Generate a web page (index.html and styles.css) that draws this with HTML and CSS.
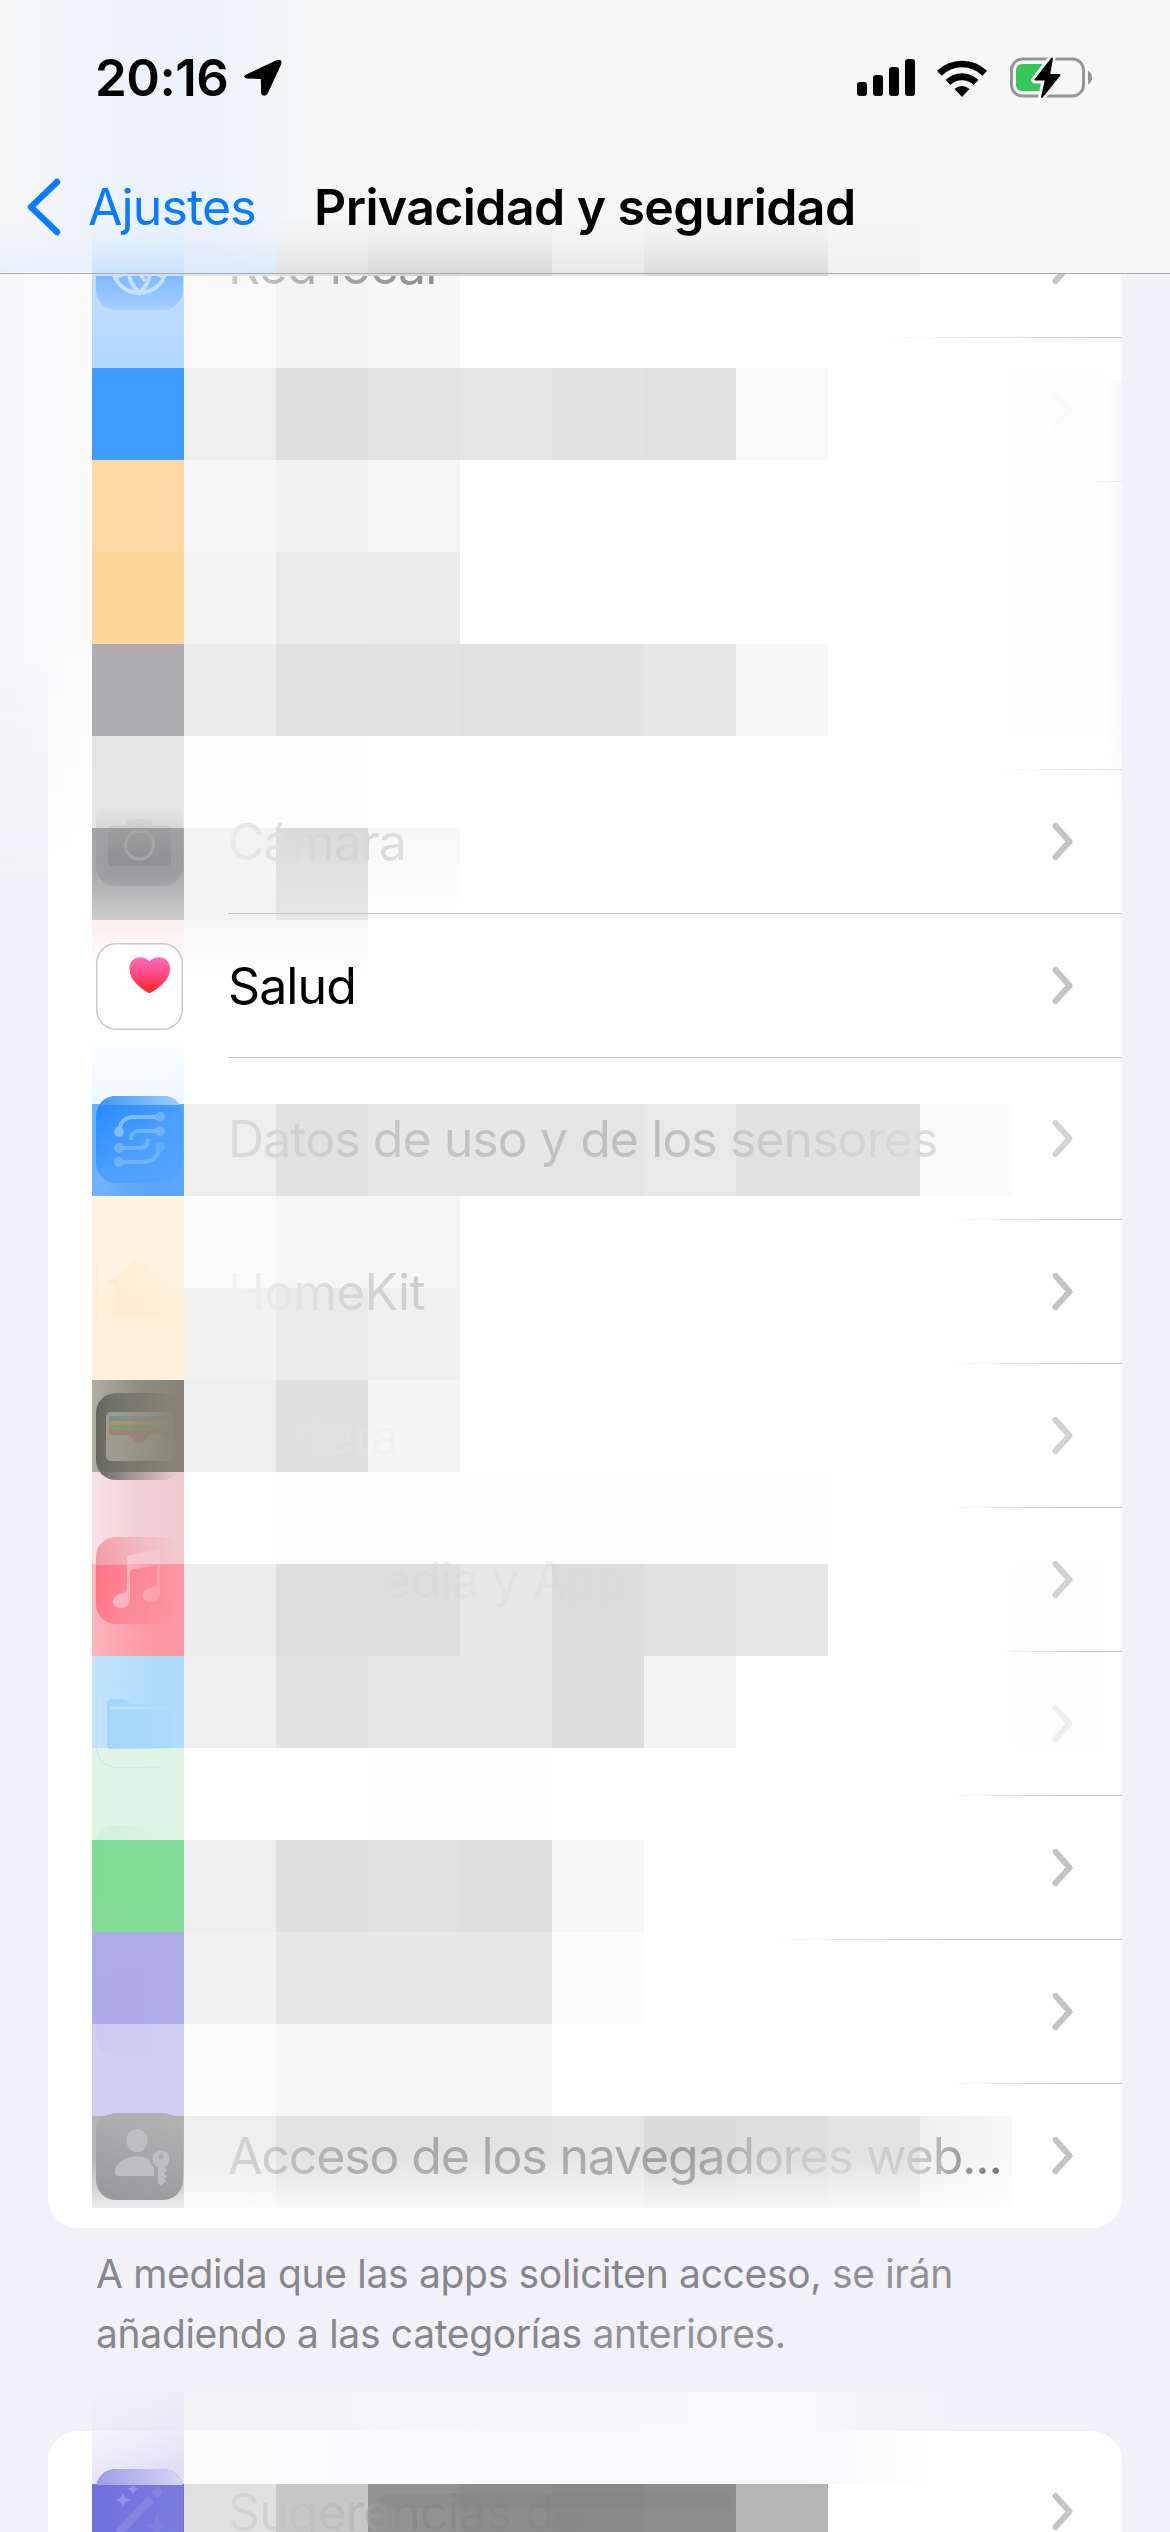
FILE: index.html
```html
<!DOCTYPE html>
<html lang="es">
<head>
<meta charset="utf-8">
<title>Privacidad y seguridad</title>
<link rel="stylesheet" href="styles.css">
</head>
<body>
<svg class="defs" width="0" height="0" aria-hidden="true">
  <symbol id="chev" viewBox="0 0 24 44"><path d="M4.500 6 L18.500 21.500 L4.500 37" fill="none" stroke="currentColor" stroke-width="6" stroke-linecap="round" stroke-linejoin="round"/></symbol>
</svg>
<div class="screen">
  <header class="header">
    <svg class="header-tint" viewBox="0 0 1170 276" aria-hidden="true">
      <defs>
        <linearGradient id="up" x1="0" y1="0" x2="0" y2="1"><stop offset="0" stop-color="#fff" stop-opacity="0"/><stop offset=".35" stop-color="#fff" stop-opacity=".2"/><stop offset="1" stop-color="#fff"/></linearGradient>
        <mask id="fadeUp"><rect x="0" y="216" width="1170" height="60" fill="url(#up)"/></mask>
        <linearGradient id="sideTint"><stop offset="0" stop-color="#eaf2fd" stop-opacity="0"/><stop offset=".45" stop-color="#eaf2fd" stop-opacity=".9"/><stop offset=".65" stop-color="#eaf2fd" stop-opacity=".8"/><stop offset="1" stop-color="#f2f4f8" stop-opacity="0"/></linearGradient>
      </defs>
      <rect x="0" y="0" width="330" height="273" fill="url(#sideTint)"/>
      <g mask="url(#fadeUp)">
        <rect x="0" y="216" width="92" height="56" fill="#e6f0fc"/>
        <rect x="92" y="216" width="92" height="60" fill="#cae2fa"/>
        <rect x="184" y="216" width="92" height="60" fill="#d9e8f8"/>
        <rect x="276" y="216" width="92" height="60" fill="#e1e1e1"/>
        <rect x="368" y="216" width="184" height="60" fill="#d7d7d7"/>
        <rect x="552" y="216" width="92" height="60" fill="#e6e6e6"/>
        <rect x="644" y="216" width="184" height="60" fill="#dadada"/>
        <rect x="828" y="216" width="92" height="60" fill="#f0f0f0"/>
      </g>
      <rect x="0" y="273" width="1170" height="1" fill="#a9abb0"/>
    </svg>
    <div class="status">
      <div class="clock">
        <span class="time">20:16</span>
        <svg class="arrow" width="40" height="40" viewBox="0 0 40 40"><path d="M3.200 16.500 L34 2 Q39.500 .5 38.200 6.200 L24.500 36 Q21 39.500 18.200 36 L17.800 21 L3.500 20.500 Q-1 18.500 3.200 16.500Z"/></svg>
      </div>
      <div class="indicators">
        <svg width="58" height="38" viewBox="0 0 58 38"><rect x="0" y="23" width="10" height="14" rx="3"/><rect x="16" y="16" width="10" height="21" rx="3"/><rect x="32" y="8" width="10" height="29" rx="3"/><rect x="48" y="0" width="10" height="37" rx="3"/></svg>
        <svg class="wifi" width="50" height="37" viewBox="0 0 50 37"><path d="M0 10.800 A36 36 0 0 1 50 10.800 L45.500 15.700 A29 29 0 0 0 4.500 15.700Z"/><path d="M8.600 20 A23.500 23.500 0 0 1 41.400 20 L36.800 25 A17 17 0 0 0 13.200 25Z"/><path d="M17.500 29 A11 11 0 0 1 32.500 29 L25 37Z"/></svg>
        <svg class="battery" width="82" height="42" viewBox="0 0 82 42"><rect x="1.500" y="2" width="72" height="37" rx="11" fill="none" stroke="#969696" stroke-width="3"/><path d="M78 13.500 Q82 16 82 20.500 Q82 25 78 27.500Z" fill="#969696"/><rect x="6" y="7" width="32" height="27" rx="6" fill="#34c759"/><path d="M42 .8 L24.800 23 H35.300 L31.500 40.500 L50 17.500 H39.500Z" fill="#f7f7f7" stroke="#f7f7f7" stroke-width="7" stroke-linejoin="round"/><path d="M42 1.500 L25.500 22.500 H36 L32 40 L49.500 18 H39Z" fill="#000" stroke="#000" stroke-width="2" stroke-linejoin="round"/></svg>
      </div>
    </div>
    <nav class="navbar">
      <svg class="back-icon" width="34" height="58" viewBox="0 0 34 58"><path d="M30 4 L4 29 L30 54" fill="none" stroke="#0a7aff" stroke-width="6.500" stroke-linecap="round" stroke-linejoin="round"/></svg>
      <span class="back">Ajustes</span>
      <h1 class="title">Privacidad y seguridad</h1>
    </nav>
  </header>

  <main class="content">
    <section class="card">
      <div class="row">
        <svg class="icon i-net" viewBox="0 0 87 87"><defs><linearGradient id="netIcon" x1="0" y1="0" x2="0" y2="1"><stop offset=".5" stop-color="#73b3ff"/><stop offset="1" stop-color="#a6cfff"/></linearGradient></defs><rect width="87" height="87" rx="20" fill="url(#netIcon)"/><g fill="none" stroke="#c9e1ff" stroke-width="4"><circle cx="43.500" cy="43" r="27"/><path d="M43.500 16 C28 30 28 56 43.500 70 C59 56 59 30 43.500 16 M17 37 Q43 58 70 37 M20 54 Q34 48 44 49 Q56 48 68 54 M43 49 L49 58"/></g></svg>
        <div class="body line-1"><span class="label ink-1">Red local</span><svg class="chev"><use href="#chev"/></svg></div>
      </div>
      <div class="row"><div class="body line-2"><svg class="chev faint"><use href="#chev"/></svg></div></div>
      <div class="row"><div class="body line-0"></div></div>
      <div class="row"><div class="body line-3"></div></div>
      <div class="row">
        <svg class="icon fade-up" viewBox="0 0 87 87"><rect width="87" height="87" rx="20" fill="#8e8e93" opacity=".4"/><path d="M17 26 H29 Q31 20 36 20 H51 Q56 20 58 26 H69 Q75 26 75 31 V61 Q75 67 70 67 H17 Q12 67 12 61 V31 Q12 26 17 26Z" fill="#858588" opacity=".5"/><circle cx="43.500" cy="46" r="14" fill="none" stroke="#a6a6a8" stroke-width="3"/></svg>
        <div class="body line-4"><span class="label ink-cam">Cámara</span><svg class="chev"><use href="#chev"/></svg></div>
      </div>
      <div class="row">
        <svg class="icon" viewBox="0 0 87 87"><defs><linearGradient id="heart" x1="0" y1="0" x2="0" y2="1"><stop offset="0" stop-color="#ff6cb8"/><stop offset=".5" stop-color="#ff4583"/><stop offset="1" stop-color="#ff2616"/></linearGradient></defs><rect x=".75" y=".75" width="85.500" height="85.500" rx="19.500" fill="#fff" stroke="#c8c8ca" stroke-width="1.500"/><path d="M53.500 18.500 C48 11.500 33.500 12.500 33.500 26 C33.500 37 44 45 53.500 50.500 C63 45 74 37 74 26 C74 12.500 59 11.500 53.500 18.500Z" fill="url(#heart)"/></svg>
        <div class="body line-5"><span class="label">Salud</span><svg class="chev"><use href="#chev"/></svg></div>
      </div>
      <div class="row tall">
        <svg class="icon" viewBox="0 0 87 87"><defs><linearGradient id="sens" x1="0" y1="0" x2=".8" y2="1"><stop offset="0" stop-color="#2389ff"/><stop offset=".6" stop-color="#4b9fff"/><stop offset="1" stop-color="#54a4ff"/></linearGradient><linearGradient id="sensTop" x1="0" x2="1"><stop offset="0" stop-color="#3b94ff"/><stop offset="1" stop-color="#a5cfff"/></linearGradient><clipPath id="r87"><rect width="87" height="87" rx="20"/></clipPath></defs><g clip-path="url(#r87)"><rect width="87" height="87" fill="url(#sens)"/><rect width="87" height="9" fill="url(#sensTop)"/></g><g fill="none" stroke="#6db3ff" stroke-width="4"><path d="M23 36 C24 26 29 21 38 21 H64" stroke="#7ebcff"/><path d="M35 44 C35 37 38 35 44 35 H64"/><path d="M23 52 H43 C49 52 52 49 52 43"/><path d="M23 66 H45 C57 66 62 61 64 51"/></g><g fill="#6fb3ff"><circle cx="23" cy="36" r="5" fill="#80bdff"/><circle cx="64" cy="21" r="5"/><circle cx="64" cy="35" r="5"/><circle cx="23" cy="52" r="5"/><circle cx="23" cy="66" r="5"/><circle cx="64" cy="51" r="5" fill="#62acff"/></g></svg>
        <div class="body line-6"><span class="label ink-sens">Datos de uso y de los sensores</span><svg class="chev soft"><use href="#chev"/></svg></div>
      </div>
      <div class="row">
        <svg class="icon fade-r" viewBox="0 0 87 87"><rect x=".5" y=".5" width="86" height="86" rx="20" fill="none" stroke="#fbecd6"/><path d="M10 35 L43.500 9 L76 35 H70 V62 Q70 68 64 68 H24 Q18 68 18 62 V35Z" fill="#ffe7c4" opacity=".7"/></svg>
        <div class="body line-6"><span class="label ink-home">HomeKit</span><svg class="chev"><use href="#chev"/></svg></div>
      </div>
      <div class="row">
        <svg class="icon fade-r" viewBox="0 0 87 87"><rect width="87" height="87" rx="20" fill="#65665c"/><rect x="10" y="19" width="67" height="49" rx="5" fill="#9d9b8f"/><path d="M13 23 H74 V29 H13Z" fill="#758a90"/><path d="M13 28 H74 V34 H13Z" fill="#ad9157"/><path d="M13 32 H74 V38 H13Z" fill="#75986f"/><path d="M13 37 H74 V42 H56 C50 42 50 50 43.500 50 C37 50 37 42 30 42 H13Z" fill="#a07a6c"/></svg>
        <div class="body line-7"><span class="label ink-wallet">Cartera</span><svg class="chev soft"><use href="#chev"/></svg></div>
      </div>
      <div class="row">
        <svg class="icon fade-r" viewBox="0 0 87 87"><defs><linearGradient id="mus" x1="0" y1="0" x2="0" y2="1"><stop offset="0" stop-color="#f0a0ab"/><stop offset=".32" stop-color="#f298a4"/><stop offset=".33" stop-color="#ff7083"/><stop offset="1" stop-color="#ff7a8b"/></linearGradient></defs><rect width="87" height="87" rx="20" fill="url(#mus)"/><path d="M31 19 L64 12 V56 C64 62 59 65 55 65 C44 65 44 53 54 51 Q61 50 61 46 V28 L34 33 V62 C34 68 30 71 25 71 C15 71 14 60 24 57 Q31 56 31 52Z" fill="#fbbcc4"/></svg>
        <div class="body line-8"><span class="label ink-media">Multimedia y Apple</span><svg class="chev soft"><use href="#chev"/></svg></div>
      </div>
      <div class="row">
        <svg class="icon fade-r" viewBox="0 0 87 87"><rect x=".5" y=".5" width="86" height="86" rx="20" fill="none" stroke="#b2dff5" opacity=".7"/><path d="M11 24 Q11 18 16 18 H25 Q31 18 34 23 H76 V68 H16 Q11 68 11 64Z" fill="#9bd2fb"/><path d="M14 27 H74" stroke="#bfe4fc" stroke-width="3"/></svg>
        <div class="body line-7"><svg class="chev faint2"><use href="#chev"/></svg></div>
      </div>
      <div class="row">
        <svg class="icon fade-r dim" viewBox="0 0 87 87"><rect width="87" height="87" rx="20" fill="#6fd487"/></svg>
        <div class="body line-9"><svg class="chev"><use href="#chev"/></svg></div>
      </div>
      <div class="row">
        <svg class="icon fade-r dim" viewBox="0 0 87 87"><rect width="87" height="87" rx="20" fill="#a3a2e4"/></svg>
        <div class="body line-7"><svg class="chev"><use href="#chev"/></svg></div>
      </div>
      <div class="row">
        <svg class="icon" viewBox="0 0 87 87"><defs><linearGradient id="acc" x1=".3" y1="0" x2="0" y2="1"><stop offset="0" stop-color="#b0b0b1"/><stop offset="1" stop-color="#97969b"/></linearGradient></defs><rect width="87" height="87" rx="20" fill="url(#acc)"/><g fill="#bebec0"><ellipse cx="41" cy="27.500" rx="10.500" ry="11.500"/><path d="M19 60 C19 49 30 43.500 41 43.500 C47 43.500 51 45 53 46.500 C54 51 56 53 58 54 V63 H23 Q19 63 19 60Z"/><path fill-rule="evenodd" d="M65 37.500 A8.500 8.500 0 0 1 68 54 L71 57 L68 60 L71 64 L68 66 L70 68 L65 73 L62 70 V54 A8.500 8.500 0 0 1 65 37.500Z M65 41 A2.500 2.500 0 1 0 65 46 A2.500 2.500 0 1 0 65 41Z"/></g></svg>
        <div class="body"><span class="label ink-access">Acceso de los navegadores web...</span><svg class="chev"><use href="#chev"/></svg></div>
      </div>
    </section>
    <p class="note">A medida que las apps soliciten acceso, <span class="paler">se irán</span><br>añadiendo a las categorías <span class="paler">anteriores.</span></p>
    <section class="card second">
      <div class="row tall">
        <svg class="icon" viewBox="0 0 87 87"><defs><linearGradient id="sug" x1="0" x2="1"><stop offset="0" stop-color="#7270dc"/><stop offset="1" stop-color="#7c7be0"/></linearGradient><linearGradient id="sugTop"><stop offset="0" stop-color="#9d9be8"/><stop offset="1" stop-color="#d6d6f4"/></linearGradient></defs><g clip-path="url(#r87)"><rect width="87" height="87" fill="url(#sug)"/><rect width="87" height="16" fill="url(#sugTop)"/></g><g fill="#9492e8"><path d="M27 23 Q28 30 35 31 Q28 32 27 39 Q26 32 19 31 Q26 30 27 23Z"/><path d="M37 14 Q38 19 43 20 Q38 21 37 26 Q36 21 31 20 Q36 19 37 14Z"/><path d="M52 27 L58 33 L26 66 Q20 67 20 61Z M56 23 L60 20 Q67 18 65 25 L62 29Z" fill="#8785e2"/><path d="M61 44 Q62 56 74 57 Q62 58 61 70 Q60 58 48 57 Q60 56 61 44Z" fill="#817fdf"/></g></svg>
        <div class="body"><span class="label ink-sug">Sugerencias de</span><svg class="chev"><use href="#chev"/></svg></div>
      </div>
    </section>
  </main>

  <svg class="mosaic" viewBox="0 0 1170 2532" shape-rendering="crispEdges" aria-hidden="true">
    <defs>
      <linearGradient id="hazeX"><stop offset="0" stop-color="#f6f6fa"/><stop offset="1" stop-color="#fbfbfc"/></linearGradient>
      <linearGradient id="fadeDown" x1="0" y1="0" x2="0" y2="1"><stop offset="0" stop-color="#fff"/><stop offset=".55" stop-color="#fff"/><stop offset="1" stop-color="#fff" stop-opacity="0"/></linearGradient>
      <mask id="mDown"><rect x="0" y="273" width="1170" height="640" fill="url(#fadeDown)"/></mask>
      <linearGradient id="cardEdge"><stop offset="0" stop-color="#f7f7fa" stop-opacity="0"/><stop offset="1" stop-color="#f7f7fa"/></linearGradient>
      <linearGradient id="down" x1="0" y1="0" x2="0" y2="1"><stop offset="0" stop-color="#f6f6f6"/><stop offset="1" stop-color="#f6f6f6" stop-opacity="0"/></linearGradient>
      <linearGradient id="pink" x1="0" y1="0" x2="0" y2="1"><stop offset="0" stop-color="#ffeef0"/><stop offset=".6" stop-color="#fff"/></linearGradient>
      <linearGradient id="bluish" x1="0" y1="0" x2="0" y2="1"><stop offset="0" stop-color="#fff"/><stop offset="1" stop-color="#eef6ff"/></linearGradient>
      <linearGradient id="net" x1="0" y1="0" x2="0" y2="1"><stop offset="0" stop-color="#c3dfff"/><stop offset="1" stop-color="#b4d7ff"/></linearGradient>
      <linearGradient id="cam" x1="0" y1="0" x2="0" y2="1"><stop offset="0" stop-color="#a5a5a6"/><stop offset=".5" stop-color="#a9a9ab"/><stop offset="1" stop-color="#cdcdce"/></linearGradient>
      <linearGradient id="c2" x1="0" y1="0" x2="0" y2="1"><stop offset="0" stop-color="#dadada"/><stop offset="1" stop-color="#e6e6e6"/></linearGradient>
      <linearGradient id="blue2" x1="0" x2="1" y1=".1"><stop offset="0" stop-color="#70b2ff"/><stop offset=".5" stop-color="#5ba6ff"/></linearGradient>
      <linearGradient id="wal"><stop offset="0" stop-color="#b0afa4"/><stop offset=".5" stop-color="#8f8d80"/><stop offset="1" stop-color="#878477"/></linearGradient>
      <linearGradient id="rose"><stop offset="0" stop-color="#f7e3e6"/><stop offset=".5" stop-color="#f3d1d6"/><stop offset="1" stop-color="#f0c9ce"/></linearGradient>
      <linearGradient id="red"><stop offset="0" stop-color="#ffb4be"/><stop offset=".6" stop-color="#fc99a5"/><stop offset="1" stop-color="#ff95a2"/></linearGradient>
      <linearGradient id="sky"><stop offset="0" stop-color="#c4e5fb"/><stop offset=".6" stop-color="#b0dcfb"/></linearGradient>
      <linearGradient id="whiten" x1="0" y1="0" x2="0" y2="1"><stop offset=".45" stop-color="#fff" stop-opacity="0"/><stop offset="1" stop-color="#fff" stop-opacity=".75"/></linearGradient>
      <linearGradient id="access"><stop offset="0" stop-color="#efefef"/><stop offset="1" stop-color="#f8f8f8"/></linearGradient>
      <linearGradient id="violet" x1="0" y1="0" x2=".4" y2="1"><stop offset="0" stop-color="#e8eaf5" stop-opacity=".1"/><stop offset="1" stop-color="#e2dff5"/></linearGradient>
      <linearGradient id="paleX"><stop offset="0" stop-color="#f8f8fb" stop-opacity=".5"/><stop offset=".8" stop-color="#f8f8fb"/><stop offset="1" stop-color="#f8f8fb" stop-opacity="0"/></linearGradient>
    </defs>
    <g mask="url(#mDown)"><rect x="0" y="273" width="92" height="640" fill="url(#hazeX)"/><rect x="1104" y="380" width="18" height="420" fill="url(#cardEdge)"/></g>
    <rect x="92" y="273" width="92" height="95" fill="url(#net)"/><rect x="184" y="276" width="92" height="92" fill="#fafafa"/><rect x="276" y="276" width="92" height="92" fill="#f4f4f4"/><rect x="368" y="276" width="92" height="92" fill="#f7f7f7"/>
    <rect x="92" y="368" width="92" height="92" fill="#409cff"/><rect x="184" y="368" width="92" height="92" fill="#eee"/><rect x="276" y="368" width="92" height="92" fill="#dfdfdf"/><rect x="368" y="368" width="92" height="92" fill="#e3e3e3"/><rect x="460" y="368" width="92" height="92" fill="#e5e5e5"/><rect x="552" y="368" width="92" height="92" fill="#e2e2e2"/><rect x="644" y="368" width="92" height="92" fill="#e0e0e0"/><rect x="736" y="368" width="92" height="92" fill="#f8f8f8"/><rect x="1012" y="368" width="92" height="368" fill="#fdfdfd"/>
    <rect x="92" y="460" width="92" height="92" fill="#fed9a4"/><rect x="184" y="460" width="92" height="92" fill="#f6f6f6"/><rect x="276" y="460" width="92" height="92" fill="#f1f1f1"/><rect x="368" y="460" width="92" height="92" fill="#f6f6f6"/>
    <rect x="92" y="552" width="92" height="92" fill="#ffd599"/><rect x="184" y="552" width="92" height="92" fill="#f4f4f4"/><rect x="276" y="552" width="184" height="92" fill="#ebebeb"/>
    <rect x="92" y="644" width="92" height="92" fill="#adadaf"/><rect x="184" y="644" width="92" height="92" fill="#ebebeb"/><rect x="276" y="644" width="92" height="92" fill="#e1e1e1"/><rect x="368" y="644" width="92" height="92" fill="#e2e2e2"/><rect x="460" y="644" width="92" height="92" fill="#e0e0e0"/><rect x="552" y="644" width="92" height="92" fill="#e2e2e2"/><rect x="644" y="644" width="92" height="92" fill="#e6e6e6"/><rect x="736" y="644" width="92" height="92" fill="#f7f7f7"/>
    <rect x="92" y="736" width="92" height="92" fill="#e5e5e5"/><rect x="184" y="736" width="184" height="92" fill="#fdfdfd"/>
    <rect x="92" y="828" width="92" height="92" fill="url(#cam)"/><rect x="184" y="828" width="92" height="92" fill="#f3f3f3"/><rect x="276" y="828" width="92" height="92" fill="url(#c2)"/><rect x="368" y="828" width="92" height="92" fill="url(#down)"/>
    <rect x="92" y="920" width="92" height="92" fill="url(#pink)"/><rect x="184" y="920" width="184" height="60" fill="url(#down)"/><rect x="92" y="1028" width="92" height="76" fill="url(#bluish)"/>
    <rect x="92" y="1104" width="92" height="92" fill="url(#blue2)"/><rect x="184" y="1104" width="92" height="92" fill="#eee"/><rect x="276" y="1104" width="92" height="92" fill="#e2e2e2"/><rect x="368" y="1104" width="184" height="92" fill="#e7e7e7"/><rect x="552" y="1104" width="92" height="92" fill="#e5e5e5"/><rect x="644" y="1104" width="92" height="92" fill="#e9e9e9"/><rect x="736" y="1104" width="184" height="92" fill="#e2e2e2"/><rect x="920" y="1104" width="92" height="92" fill="#fafafa"/>
    <rect x="92" y="1196" width="92" height="92" fill="#fff3e1"/><rect x="184" y="1196" width="92" height="92" fill="#fbfbfb"/><rect x="276" y="1196" width="184" height="92" fill="#f6f6f6"/>
    <rect x="92" y="1288" width="92" height="92" fill="#fff0db"/><rect x="184" y="1288" width="92" height="92" fill="#f2f2f2"/><rect x="276" y="1288" width="92" height="92" fill="#eaeaea"/><rect x="368" y="1288" width="92" height="92" fill="#f0f0f0"/>
    <rect x="92" y="1380" width="92" height="92" fill="url(#wal)"/><rect x="184" y="1380" width="92" height="92" fill="#efefef"/><rect x="276" y="1380" width="92" height="92" fill="#dfdfdf"/><rect x="368" y="1380" width="92" height="92" fill="#f5f5f5"/>
    <rect x="92" y="1472" width="92" height="92" fill="url(#rose)"/><rect x="276" y="1472" width="552" height="92" fill="#fdfdfd"/>
    <rect x="92" y="1564" width="92" height="92" fill="url(#red)"/><rect x="184" y="1564" width="92" height="92" fill="#ededed"/><rect x="276" y="1564" width="184" height="92" fill="#dedede"/><rect x="460" y="1564" width="92" height="92" fill="#e7e7e7"/><rect x="552" y="1564" width="92" height="92" fill="#dcdcdc"/><rect x="644" y="1564" width="92" height="92" fill="#e1e1e1"/><rect x="736" y="1564" width="92" height="92" fill="#e6e6e6"/>
    <rect x="92" y="1656" width="92" height="92" fill="url(#sky)"/><rect x="184" y="1656" width="92" height="92" fill="#eee"/><rect x="276" y="1656" width="92" height="92" fill="#e2e2e2"/><rect x="368" y="1656" width="184" height="92" fill="#e7e7e7"/><rect x="552" y="1656" width="92" height="92" fill="#ddd"/><rect x="644" y="1656" width="92" height="92" fill="#f3f3f3"/>
    <rect x="1012" y="1564" width="92" height="184" fill="#fdfdfd"/>
    <rect x="92" y="1748" width="92" height="92" fill="#dff4e5"/><rect x="368" y="1748" width="184" height="92" fill="#fdfdfd"/>
    <rect x="92" y="1840" width="92" height="92" fill="#82dc98"/><rect x="184" y="1840" width="92" height="92" fill="#eee"/><rect x="276" y="1840" width="92" height="92" fill="#dfdfdf"/><rect x="368" y="1840" width="92" height="92" fill="#e1e1e1"/><rect x="460" y="1840" width="92" height="92" fill="#dfdfdf"/><rect x="552" y="1840" width="92" height="92" fill="#f7f7f7"/>
    <rect x="92" y="1932" width="92" height="92" fill="#aeade9"/><rect x="184" y="1932" width="92" height="92" fill="#f2f2f2"/><rect x="276" y="1932" width="276" height="92" fill="#e7e7e7"/><rect x="552" y="1932" width="92" height="92" fill="#fcfcfc"/>
    <rect x="92" y="2024" width="92" height="92" fill="#d1cff1"/><rect x="184" y="2024" width="92" height="92" fill="#fbfbfb"/><rect x="276" y="2024" width="276" height="92" fill="#f7f7f7"/>
    <rect x="92" y="2116" width="92" height="92" fill="#b3b3b3"/><rect x="184" y="2116" width="92" height="92" fill="#eee"/><rect x="276" y="2116" width="276" height="92" fill="#e3e3e3"/><rect x="552" y="2116" width="92" height="92" fill="#e5e5e5"/><rect x="644" y="2116" width="92" height="92" fill="#dbdbdb"/><rect x="736" y="2116" width="92" height="92" fill="#dfdfdf"/><rect x="828" y="2116" width="92" height="92" fill="#e3e3e3"/><rect x="920" y="2116" width="92" height="92" fill="url(#access)"/><rect x="92" y="2116" width="920" height="92" fill="url(#whiten)"/>
    <rect x="184" y="2392" width="770" height="92" fill="url(#paleX)"/><rect x="92" y="2392" width="92" height="92" fill="url(#violet)"/>
    <rect x="92" y="2484" width="92" height="48" fill="#7270dc"/><rect x="184" y="2484" width="92" height="48" fill="#e0e0e0"/><rect x="276" y="2484" width="92" height="48" fill="#c7c7c7"/><rect x="368" y="2484" width="92" height="48" fill="#929292"/><rect x="460" y="2484" width="92" height="48" fill="#8d8d8d"/><rect x="552" y="2484" width="92" height="48" fill="#898989"/><rect x="644" y="2484" width="92" height="48" fill="#8e8e8e"/><rect x="736" y="2484" width="92" height="48" fill="#b5b5b5"/>
    <path d="M378 2508 Q378 2493 390 2493 H730 V2508Z" fill="#858585" opacity=".5"/>
  </svg>
</div>
</body>
</html>
```

FILE: styles.css
```css
* { box-sizing: border-box; }
body { margin: 0; background: #f2f1f7; font-family: Inter, "Liberation Sans", sans-serif; color: #000; }
.defs { position: absolute; }
.screen { position: relative; width: 1170px; height: 2532px; overflow: hidden; background: #f2f1f7; isolation: isolate; }

.header { position: relative; z-index: 5; height: 273px; background: #f7f7f7; }
.header-tint { position: absolute; left: 0; top: 0; width: 1170px; height: 276px; z-index: -1; }
.status { display: flex; justify-content: space-between; height: 156px; padding: 0 78px 0 95px; align-items: center; }
.clock { display: flex; align-items: center; gap: 15px; }
.time { font-size: 51px; font-weight: 600; line-height: 60px; letter-spacing: -0.5px; }
.indicators { display: flex; align-items: center; }
.wifi { margin-left: 22px; }
.battery { margin-left: 23px; }
.navbar { display: flex; align-items: center; height: 102px; padding-left: 27px; }
.back-icon { flex: none; margin-right: 27px; }
.back { flex: none; width: 226px; font-size: 50px; letter-spacing: -0.9px; line-height: 60px; color: #0a7aff; }
.title { margin: 0; font-size: 50px; font-weight: 600; letter-spacing: -0.6px; line-height: 60px; white-space: nowrap; }

.content { margin-top: -79px; padding: 0 48px; }
.card { background: #fff; border-radius: 30px; }
.row { display: flex; align-items: center; justify-content: flex-end; height: 144px; }
.row.tall { height: 162px; }
.icon { position: relative; z-index: 2; flex: none; width: 87px; height: 87px; margin-right: 45px; }
.body { --from: 100%; position: relative; z-index: 2; flex: none; width: 894px; height: 100%; display: flex; align-items: center; padding-right: 47px;
  background: linear-gradient(90deg, rgba(196,196,199,0) var(--from), #c4c4c7 var(--to, 100%)) bottom / 100% 1px no-repeat; }
.label { font-size: 50px; line-height: 64px; letter-spacing: -0.9px; white-space: nowrap; }
.chev { flex: none; width: 24px; height: 44px; margin-left: auto; color: #c4c4c6; }
.chev.soft { color: #d2d2d3; }
.chev.faint { color: #f6f6f6; }
.chev.faint2 { color: #ededee; }

.line-1 { --from: 72%; }
.line-2 { --from: 96%; opacity: .4; }
.line-3 { --from: 85%; --to: 108%; }
.line-4, .line-5 { --from: -60%; --to: 0%; }
.line-6 { --from: 80%; --to: 97%; }
.line-7 { --from: 80%; --to: 94%; }
.line-8 { --from: 86%; --to: 96%; }
.line-9 { --from: 60%; --to: 82%; }

.ink-1, .ink-sens, .ink-home, .ink-wallet, .ink-media, .ink-access, .ink-sug, .ink-cam { color: transparent; -webkit-background-clip: text; background-clip: text; }
.ink-1 { background-image: linear-gradient(90deg, #c8c8c8, #8c8c8c); }
.ink-cam { background-image: linear-gradient(90deg, #ebebeb, #d2d2d2 60%, #dedede); }
.ink-sens { letter-spacing: -0.95px; background-image: linear-gradient(90deg, #dcdcdc, #c6c6c6 20%, #bebebe 60%, #cecece 80%, #dcdcdc); }
.ink-home { background-image: linear-gradient(90deg, #f4f4f4, #d6d6d6 60%, #cdcdcd); }
.ink-wallet { background-image: linear-gradient(90deg, transparent 35%, #eaeaea); opacity: .4; }
.ink-media { background-image: linear-gradient(90deg, transparent 34%, #d2d2d2 40%, #d6d6d6 75%, transparent 92%); opacity: .28; }
.ink-access { letter-spacing: -1.15px; background-image: linear-gradient(90deg, rgba(0,0,0,.1), rgba(0,0,0,.25) 18%, rgba(0,0,0,.27) 60%, rgba(0,0,0,.08) 76%, rgba(0,0,0,.1) 88%, rgba(0,0,0,.55)); }
.ink-sug { background-image: linear-gradient(90deg, #cfcfcf, #b4b4b4 35%, #858585 50%, #888); opacity: .6; }
.fade-r { -webkit-mask-image: linear-gradient(90deg, #000, transparent 95%); mask-image: linear-gradient(90deg, #000, transparent 95%); }
.fade-up { -webkit-mask-image: linear-gradient(0deg, #000 30%, transparent 90%); mask-image: linear-gradient(0deg, #000 30%, transparent 90%); }
.dim { opacity: .12; }

.note { margin: 16px 48px 0; font-size: 39px; letter-spacing: -0.32px; line-height: 60px; color: #87868c; white-space: nowrap; }
.paler { color: #919096; }
.second { margin-top: 67px; }
.mosaic { position: absolute; left: 0; top: 0; width: 1170px; height: 2532px; z-index: 1; pointer-events: none; }
```
